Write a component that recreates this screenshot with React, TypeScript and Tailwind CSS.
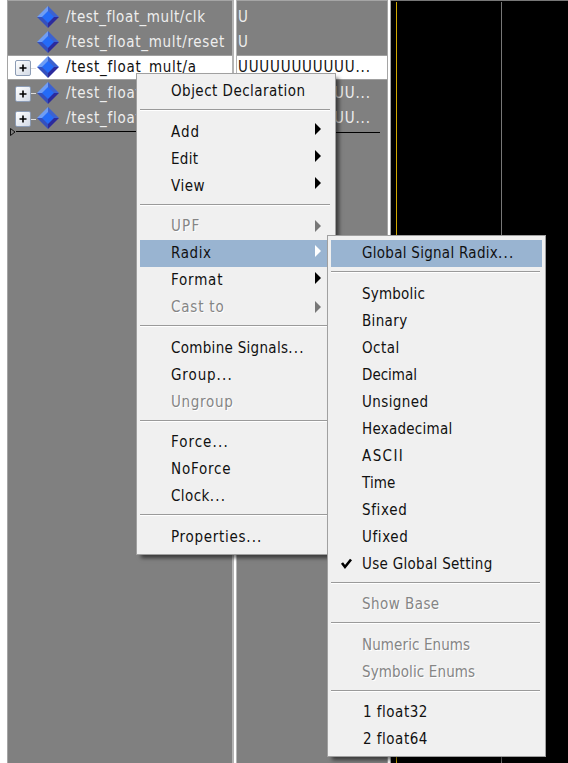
import React from "react";

interface MenuEntry {
  label?: string;
  tracking?: string;
  more?: boolean;
  arrow?: boolean;
  disabled?: boolean;
  active?: boolean;
  checked?: boolean;
}

interface SignalRow {
  name: string;
  value: string;
  tracking: string;
  expandable?: boolean;
  selected?: boolean;
}

const signals: SignalRow[] = [
  { name: "/test_float_mult/clk", value: "U", tracking: "tracking-[0.55px]" },
  { name: "/test_float_mult/reset", value: "U", tracking: "tracking-[0.7px]" },
  {
    name: "/test_float_mult/a",
    value: "UUUUUUUUUUU...",
    tracking: "tracking-[0.72px]",
    expandable: true,
    selected: true,
  },
  {
    name: "/test_float_mult/b",
    value: "UUUUUUUUUUU...",
    tracking: "tracking-[0.72px]",
    expandable: true,
  },
  {
    name: "/test_float_mult/q",
    value: "UUUUUUUUUUU...",
    tracking: "tracking-[0.72px]",
    expandable: true,
  },
];

// an entry without a label is a separator
const mainMenu: MenuEntry[] = [
  { label: "Object Declaration", tracking: "tracking-[0.47px]" },
  {},
  { label: "Add", tracking: "tracking-[1px]", arrow: true },
  { label: "Edit", tracking: "tracking-[0.3px]", arrow: true },
  { label: "View", tracking: "tracking-[0.5px]", arrow: true },
  {},
  { label: "UPF", tracking: "tracking-[1.2px]", arrow: true, disabled: true },
  { label: "Radix", tracking: "tracking-[0.6px]", arrow: true, active: true },
  { label: "Format", tracking: "tracking-[0.8px]", arrow: true },
  { label: "Cast to", tracking: "tracking-[0.8px]", arrow: true, disabled: true },
  {},
  { label: "Combine Signals", tracking: "tracking-[0.3px]", more: true },
  { label: "Group", tracking: "tracking-[0.9px]", more: true },
  { label: "Ungroup", tracking: "tracking-[0.7px]", disabled: true },
  {},
  { label: "Force", tracking: "tracking-[1px]", more: true },
  { label: "NoForce", tracking: "tracking-[0.8px]" },
  { label: "Clock", tracking: "tracking-[0.4px]", more: true },
  {},
  { label: "Properties", tracking: "tracking-[0.7px]", more: true },
];

const radixMenu: MenuEntry[] = [
  {
    label: "Global Signal Radix",
    tracking: "tracking-[0.28px]",
    more: true,
    active: true,
  },
  {},
  { label: "Symbolic", tracking: "tracking-[0.2px]" },
  { label: "Binary", tracking: "tracking-[0.35px]" },
  { label: "Octal", tracking: "tracking-[0.5px]" },
  { label: "Decimal", tracking: "tracking-[0px]" },
  { label: "Unsigned", tracking: "tracking-[0.4px]" },
  { label: "Hexadecimal", tracking: "tracking-[0.25px]" },
  { label: "ASCII", tracking: "tracking-[1.4px]" },
  { label: "Time", tracking: "tracking-[0.1px]" },
  { label: "Sfixed", tracking: "tracking-[0.65px]" },
  { label: "Ufixed", tracking: "tracking-[0.6px]" },
  { label: "Use Global Setting", tracking: "tracking-[0.3px]", checked: true },
  {},
  { label: "Show Base", tracking: "tracking-[0.45px]", disabled: true },
  {},
  { label: "Numeric Enums", tracking: "tracking-[0.1px]", disabled: true },
  { label: "Symbolic Enums", tracking: "tracking-[0.12px]", disabled: true },
  {},
  { label: "1 float32", tracking: "tracking-[0.5px] pl-px" },
  { label: "2 float64", tracking: "tracking-[0.5px] pl-px" },
];

const Diamond: React.FC = () => (
  <svg width="24" height="24" viewBox="0 0 24 24" className="shrink-0">
    <path d="M12 1L1 12h11z" fill="#6f9df5" />
    <path d="M12 1l11 11H12z" fill="#3d62cf" />
    <path d="M1 12l11 11V12z" fill="#3550bd" />
    <path d="M23 12L12 23V12z" fill="#2c2a9c" />
    <path d="M12 6l6 6-6 6-6-6z" fill="#246bf8" />
  </svg>
);

const Expander: React.FC = () => (
  <div className="flex w-[16px] h-[16px] shrink-0 items-center justify-center rounded-[2px] border border-[#8c9cb5] bg-linear-to-br from-white to-[#d3dae6]">
    <svg width="10" height="10" viewBox="0 0 10 10">
      <path d="M1.500 5h7M5 1.500v7" stroke="#000" strokeWidth="1.600" />
    </svg>
  </div>
);

const Menu: React.FC<{ entries: MenuEntry[] }> = ({ entries }) => (
  <div className="w-full h-full border border-[#a0a0a0] bg-[#f0f0f0] px-[3px] pt-[3.5px] shadow-[4px_4px_4px_-1px_rgba(0,0,0,0.55)]">
    {entries.map((entry, i) => {
      if (!entry.label) {
        return (
          <div key={i} className="h-[13.5px] pt-[4.5px] pr-[2px]">
            <div className="h-[2px] border-t border-[#9a9a9a] bg-white" />
          </div>
        );
      }
      return (
        <div
          key={i}
          className={`flex h-[27px] items-center pr-[11px] ${
            entry.active ? "bg-[#99b4d1]" : ""
          } ${
            entry.disabled
              ? "text-[#858585] [text-shadow:1px_1px_0_#fff]"
              : "text-[#111]"
          }`}
        >
          <div className="w-[31px] shrink-0 pl-[9px]">
            {entry.checked && (
              <svg width="13" height="13" viewBox="0 0 13 13">
                <path
                  d="M2 6l3 4 6-7.500"
                  fill="none"
                  stroke="#000"
                  strokeWidth="2.600"
                />
              </svg>
            )}
          </div>
          <span className={`flex-1 whitespace-nowrap ${entry.tracking}`}>
            {entry.label}
            {entry.more && <span className="tracking-[1.2px]">...</span>}
          </span>
          {entry.arrow && (
            <svg
              width="6"
              height="12"
              viewBox="0 0 6 12"
              className={entry.disabled ? "" : "-mt-[5px]"}
            >
              <path
                d="M0 0l6 6-6 6z"
                fill={entry.active ? "#fff" : entry.disabled ? "#777" : "#000"}
              />
            </svg>
          )}
        </div>
      );
    })}
  </div>
);

const App: React.FC = () => {
  return (
    <div className="relative flex w-[568px] h-[763px] overflow-hidden bg-white pl-[7px] font-['DejaVu_Sans_Condensed','DejaVu_Sans',sans-serif] text-[15px] leading-[20px] [font-stretch:condensed]">
      <div className="w-[225px] border-l border-t border-[#a5a5a5] bg-[#808080] pt-[3px]">
        {signals.map((row) => (
          <div
            key={row.name}
            className={`flex h-[25.4px] items-center ${
              row.selected
                ? "bg-white bg-clip-padding border-y border-[#a0a0a0] text-[#111]"
                : "text-[#eee]"
            }`}
          >
            <div className="flex w-[28px] shrink-0 items-center pl-[7px] pt-[2px]">
              {row.expandable && (
                <>
                  <Expander />
                  <div className="h-px flex-1 bg-[#ddd]" />
                </>
              )}
            </div>
            <Diamond />
            <span className={`pl-[6px] whitespace-nowrap ${row.tracking}`}>
              {row.name}
            </span>
          </div>
        ))}
        <div className="-mt-[3px] flex items-center">
          <svg width="6" height="8" viewBox="0 0 6 8" className="ml-[2px]">
            <path d="M.500 .500L5 4 .500 7.500z" fill="none" stroke="#111" />
          </svg>
          <div className="h-px flex-1 bg-black" />
        </div>
      </div>
      <div className="w-[5px] border-l-2 border-r border-[#b4b4b4] bg-white" />
      <div className="w-[150px] border-t border-[#a5a5a5] bg-[#808080] pt-[3px]">
        {signals.map((row) => (
          <div
            key={row.name}
            className={`flex h-[25.4px] items-center pl-px ${
              row.selected
                ? "bg-white border-y border-[#a0a0a0] text-[#111]"
                : "text-[#eee]"
            }`}
          >
            <span className="whitespace-nowrap tracking-[0.8px]">{row.value}</span>
          </div>
        ))}
        <div className="mt-[1px] mr-[7px] h-px bg-black" />
      </div>
      <div className="w-[4px] border-l border-r border-[#a5a5a5] bg-white" />
      <div className="flex flex-1 border-t border-[#777] bg-black pl-[5px] pt-px">
        <div className="w-px bg-[#d0a800]" />
        <div className="ml-[104px] w-px bg-[#777]" />
      </div>

      <div className="absolute left-[136px] top-[73px] w-[200px] h-[482px]">
        <Menu entries={mainMenu} />
      </div>
      <div className="absolute left-[327px] top-[235px] w-[219px] h-[522px]">
        <Menu entries={radixMenu} />
      </div>
    </div>
  );
};

export default App;
